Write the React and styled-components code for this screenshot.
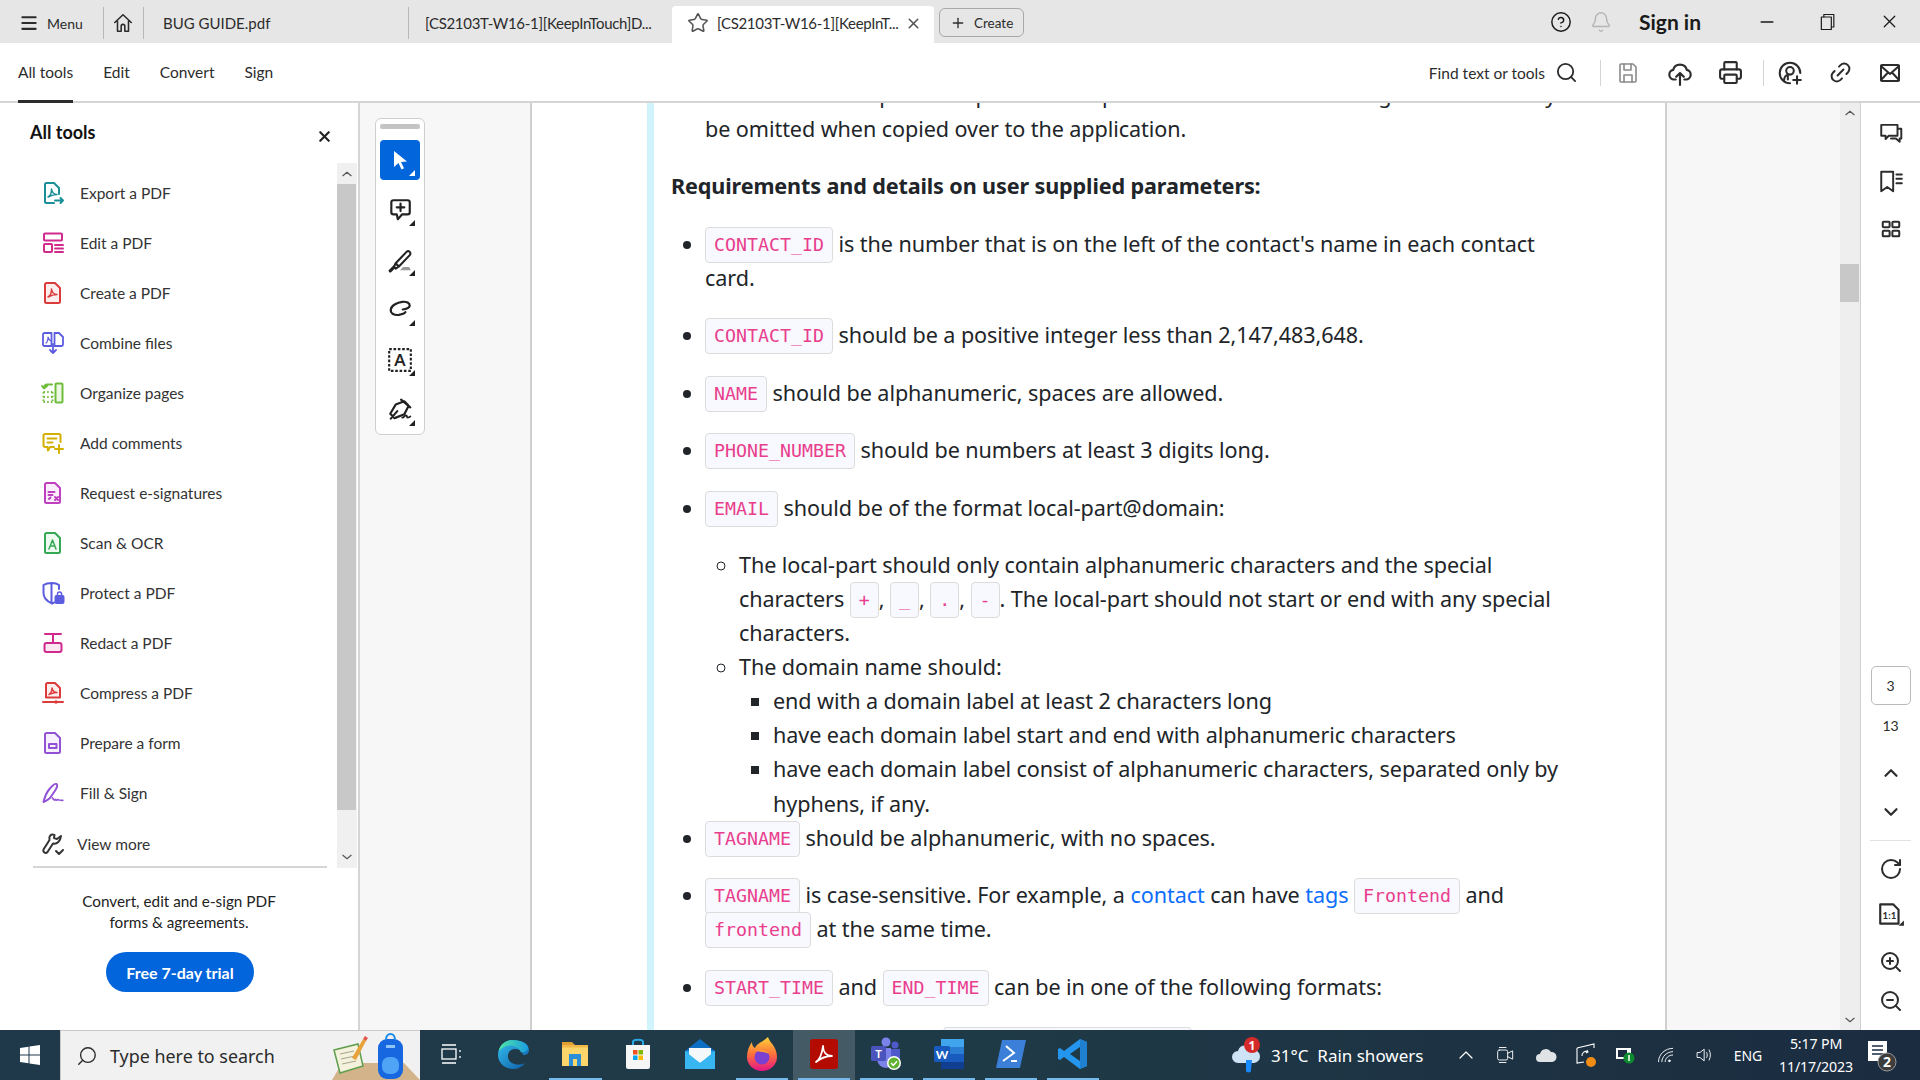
import React from 'react';
import styled, { createGlobalStyle } from 'styled-components';
import {
  Bell, ChevronDown, ChevronUp, CircleHelp, Link2, Menu, Minus, Plus, Printer, RotateCw,
  Search, Star, X, ZoomIn, ZoomOut,
} from 'lucide-react';

const Global = createGlobalStyle`
  html, body { margin: 0; padding: 0; background: #fff; }
  * { box-sizing: border-box; }
`;

const UI = `Lato, "Noto Sans", sans-serif`;
const DOC = `"Noto Sans", "Open Sans", sans-serif`;

const Root = styled.div`
  width: 1920px;
  height: 1080px;
  display: flex;
  flex-direction: column;
  overflow: hidden;
  font-family: ${UI};
  color: #2c2c2c;
`;

/* ---------- tab strip ---------- */
const TabStrip = styled.div`
  height: 43px;
  flex: none;
  display: flex;
  align-items: flex-end;
  background: #e6e6e6;
  font-size: 15px;
`;
const StripCell = styled.div`
  width: ${p => p.$w}px;
  flex: none;
  display: flex;
  align-items: center;
  padding-left: ${p => p.$pad || 0}px;
  margin-bottom: 4px;
  height: 32px;
  border-left: ${p => (p.$sep ? '1px solid #b8b8b8' : 'none')};
  white-space: nowrap;
  letter-spacing: ${p => (p.$tight ? '-0.3px' : '0')};
  gap: ${p => p.$gap || 0}px;
`;
const MenuLabel = styled.span`
  font-size: 14px;
`;
const ActiveTab = styled.div`
  width: 262px;
  height: 37px;
  flex: none;
  display: flex;
  align-items: center;
  background: #fff;
  border-radius: 4px 4px 0 0;
  padding: 0 0 3px 15px;
`;
const ActiveTitle = styled.span`
  width: 196px;
  padding-left: 8px;
  white-space: nowrap;
  font-size: 15px;
  letter-spacing: -0.3px;
`;
const CreateButton = styled.div`
  width: 85px;
  height: 29px;
  margin: 0 0 6px 5px;
  flex: none;
  display: flex;
  align-items: center;
  gap: 8px;
  padding-left: 10px;
  border: 1px solid #a8a8a8;
  border-radius: 6px;
  font-size: 13.5px;
`;
const StripRight = styled.div`
  margin-left: auto;
  height: 43px;
  display: flex;
  align-items: center;
`;
const StripSlot = styled.div`
  width: ${p => p.$w}px;
  display: flex;
  justify-content: center;
  color: ${p => p.$color || '#1a1a1a'};
`;
const SignIn = styled.div`
  width: 115px;
  padding-left: 18px;
  font-size: 21px;
  font-weight: 700;
  color: #1a1a1a;
`;

/* ---------- tool bar ---------- */
const ToolBar = styled.div`
  height: 60px;
  flex: none;
  display: flex;
  align-items: stretch;
  padding: 0 4px 0 18px;
  border-bottom: 2px solid #d5d5d5;
`;
const NavItem = styled.div`
  display: flex;
  align-items: center;
  margin-right: 30px;
  font-size: 15.5px;
  height: 60px;
  padding-top: 1px;
  border-bottom: 3px solid ${p => (p.$active ? '#2c2c2c' : 'transparent')};
`;
const BarRight = styled.div`
  margin-left: auto;
  display: flex;
  align-items: center;
  padding-top: 1px;
`;
const FindLabel = styled.span`
  font-size: 15.5px;
  margin-right: 10px;
`;
const BarSep = styled.div`
  width: 1px;
  height: 26px;
  background: #d5d5d5;
`;
const BarIcon = styled.div`
  width: ${p => p.$w || 50}px;
  display: flex;
  justify-content: center;
  color: ${p => p.$color || '#2c2c2c'};
`;

/* ---------- main ---------- */
const Main = styled.div`
  flex: 1;
  display: flex;
  min-height: 0;
`;

const ToolsPanel = styled.aside`
  width: 360px;
  flex: none;
  border-right: 2px solid #d5d5d5;
  display: flex;
  flex-direction: column;
`;
const PanelHead = styled.div`
  height: 60px;
  flex: none;
  display: flex;
  justify-content: space-between;
  padding: 18px 25px 0 30px;
  font-size: 18px;
  font-weight: 700;
  color: #111;
`;
const PanelClose = styled.div`
  padding-top: 6px;
  color: #222;
`;
const PanelBody = styled.div`
  display: flex;
  height: 705px;
  flex: none;
`;
const ToolList = styled.div`
  width: 294px;
  margin-left: 33px;
  border-bottom: 2px solid #d5d5d5;
`;
const ToolRow = styled.div`
  height: 50px;
  display: flex;
  align-items: center;
  font-size: 15.5px;
  color: #333;
  gap: 15px;
  padding-left: 8px;
`;
const MoreRow = styled(ToolRow)`
  gap: 12px;
  height: 52px;
`;
const FirstGap = styled.div`
  height: 5px;
`;
const PanelScroll = styled.div`
  width: 20px;
  margin-left: 10px;
  display: flex;
  flex-direction: column;
  background: #f0f0f0;
  color: #555;
`;
const ScrollCap = styled.div`
  height: ${p => p.$h}px;
  flex: none;
  display: flex;
  align-items: ${p => p.$align || 'center'};
  justify-content: center;
  padding-bottom: ${p => p.$bottom || 0}px;
`;
const ScrollThumb = styled.div`
  flex: 1;
  background: #c8c8c8;
  margin-right: 1px;
`;
const Promo = styled.div`
  text-align: center;
  font-size: 15.3px;
  line-height: 21px;
  color: #222;
  padding-top: 23px;
`;
const TrialButton = styled.div`
  width: 148px;
  height: 40px;
  margin: 19px 0 0 106px;
  border-radius: 20px;
  background: #0265dc;
  color: #fff;
  font-weight: 700;
  font-size: 16px;
  display: flex;
  align-items: center;
  justify-content: center;
`;

const ViewerGutter = styled.div`
  width: 172px;
  flex: none;
  background: #f7f7f7;
  border-right: 2px solid #cfcfcf;
  padding: 15px 0 0 15px;
`;
const QuickRail = styled.div`
  width: 50px;
  height: 317px;
  border: 1px solid #cfcfcf;
  border-radius: 6px;
  background: #fff;
  padding: 5px 4px 0 4px;
  display: flex;
  flex-direction: column;
  align-items: center;
  gap: 10px;
`;
const Grabber = styled.div`
  width: 40px;
  height: 5px;
  border-radius: 2px;
  background: #c4c4c4;
  margin-bottom: 1px;
`;
const RailButton = styled.div`
  width: 40px;
  height: 40px;
  flex: none;
  position: relative;
  display: flex;
  align-items: center;
  justify-content: center;
  border-radius: 4px;
  background: ${p => (p.$on ? '#0265dc' : 'transparent')};
  color: ${p => (p.$on ? '#fff' : '#222')};
  &::after {
    content: '';
    position: absolute;
    right: 5px;
    bottom: 4px;
    border-style: solid;
    border-width: 0 0 6px 6px;
    border-color: transparent transparent ${p => (p.$on ? '#fff' : '#222')} transparent;
  }
`;

/* ---------- document ---------- */
const DocPage = styled.main`
  width: 1133px;
  flex: none;
  overflow: hidden;
  background: #fff;
`;
const Callout = styled.div`
  margin: -25px 0 0 115px;
  border-left: 7px solid #cff4fc;
  padding-left: 17px;
  height: 1100px;
  font-family: ${DOC};
  font-size: 21.6px;
  line-height: 34.1px;
  letter-spacing: -0.08px;
  color: #212529;
  white-space: nowrap;
`;
const DocList = styled.ul`
  margin: 0;
  padding-left: 34px;
`;
const Para = styled.p`
  margin: 0 0 ${p => (p.$tight ? 0 : 23.3)}px;
`;
const Heading = styled(Para)`
  font-weight: 700;
  letter-spacing: -0.13px;
`;
const Code = styled.code`
  display: inline-block;
  height: 36px;
  line-height: 33px;
  padding: 0 8px;
  vertical-align: top;
  margin: 0 0 -2px;
  letter-spacing: 0;
  font-family: "DejaVu Sans Mono", "Liberation Mono", monospace;
  font-size: 18.27px;
  color: #e83e8c;
  background: #f8f8ff;
  border: 1px solid #dcdcdc;
  border-radius: 4px;
`;
const DocLink = styled.a`
  color: #0d6efd;
`;
const FormatRow = styled.p`
  margin: 0;
  padding-left: 238px;
`;

const PageGutter = styled.div`
  flex: 1;
  background: #f7f7f7;
  border-left: 2px solid #cfcfcf;
`;
const DocScroll = styled.div`
  width: 20px;
  flex: none;
  display: flex;
  flex-direction: column;
  background: #eeeeee;
  color: #555;
`;
const DocThumb = styled.div`
  height: 38px;
  flex: none;
  margin: 141px 1px 0 0;
  background: #c8c8c8;
`;
const RightRail = styled.div`
  width: 60px;
  flex: none;
  border-left: 1px solid #cfcfcf;
  display: flex;
  flex-direction: column;
  align-items: center;
  color: #2c2c2c;
  padding-top: 6px;
`;
const RailIcon = styled.div`
  height: ${p => p.$h || 48}px;
  flex: none;
  display: flex;
  align-items: center;
  justify-content: center;
`;
const Spacer = styled.div`
  flex: 1;
`;
const PageBox = styled.div`
  width: 40px;
  height: 39px;
  flex: none;
  border: 1px solid #bbb;
  border-radius: 5px;
  display: flex;
  align-items: center;
  justify-content: center;
  font-size: 14px;
`;
const PageTotal = styled.div`
  height: 40px;
  margin-bottom: 8px;
  flex: none;
  display: flex;
  align-items: center;
  font-size: 14px;
`;
const RailRule = styled.div`
  width: 41px;
  height: 1px;
  flex: none;
  margin: 8px 0 4px;
  background: #e2e2e2;
`;

/* ---------- taskbar ---------- */
const Taskbar = styled.footer`
  height: 50px;
  flex: none;
  display: flex;
  align-items: stretch;
  background: linear-gradient(90deg, #20394a 0%, #1f3a47 50%, #1b2c40 100%);
  color: #fff;
  font-family: ${DOC};
`;
const StartCell = styled.div`
  width: 60px;
  flex: none;
  display: flex;
  align-items: center;
  justify-content: center;
`;
const SearchBox = styled.div`
  width: 360px;
  flex: none;
  display: flex;
  align-items: center;
  background: #f1f1f1;
  border: 1px solid #c9c9c9;
  border-width: 1px 0 0 1px;
  color: #2b2b2b;
  font-size: 17.9px;
  padding-left: 15px;
  gap: 12px;
`;
const SearchArt = styled.div`
  margin-left: auto;
  height: 49px;
`;
const AppSlot = styled.div`
  width: 62.2px;
  flex: none;
  display: flex;
  flex-direction: column;
  background: ${p => (p.$active ? 'rgba(255,255,255,0.17)' : 'transparent')};
`;
const AppIcon = styled.div`
  flex: 1;
  display: flex;
  align-items: center;
  justify-content: center;
`;
const AppMark = styled.div`
  height: 2px;
  margin: 0 5px;
  background: ${p => (p.$on ? '#76b9ed' : 'transparent')};
`;
const Weather = styled.div`
  width: 215px;
  margin-left: auto;
  flex: none;
  display: flex;
  align-items: center;
  gap: 10px;
  font-size: 17px;
  white-space: pre;
`;
const TraySlot = styled.div`
  width: ${p => p.$w || 40}px;
  flex: none;
  display: flex;
  align-items: center;
  justify-content: center;
  font-size: 14px;
`;
const Clock = styled(TraySlot)`
  flex-direction: column;
  line-height: 23px;
  font-size: 14.2px;
  letter-spacing: -0.15px;
`;
const TrayEnd = styled.div`
  width: 16px;
  flex: none;
`;

/* ---------- drawings ---------- */
const Svg = ({ size = 24, w, h, vb = '0 0 24 24', color = 'currentColor', sw = 1.8, children }) => (
  <svg width={w || size} height={h || size} viewBox={vb} fill="none" stroke={color} strokeWidth={sw} strokeLinecap="round" strokeLinejoin="round">
    {children}
  </svg>
);
const Squiggle = ({ c, d = 'M7 16c2-1 3.5-4.5 3.5-8 .5 3 2.500 5.500 5.500 5.500-3 0-6 1-9 2.500z' }) => (
  <path d={d} stroke={c} strokeWidth="1.500" />
);
const DocShape = ({ c, fill = 'none' }) => (
  <path d="M4 3.500C4 2.700 4.700 2 5.500 2H14l5 5v13.500c0 .8-.7 1.500-1.500 1.500h-12C4.700 22 4 21.300 4 20.500z" stroke={c} fill={fill} strokeWidth="2" />
);

const tools = [
  ['Export a PDF', <Svg><path d="M18 13V7l-5-5H5.500C4.700 2 4 2.700 4 3.500v17c0 .8.700 1.500 1.500 1.500H13" stroke="#1a8f97" strokeWidth="2" /><Squiggle c="#1a8f97" /><path d="M14 19.500h8M19.500 17l2.500 2.500-2.500 2.500" stroke="#1a8f97" strokeWidth="2" /></Svg>],
  ['Edit a PDF', <Svg sw={2} color="#d02a8d"><rect x="3" y="2.500" width="18" height="7" rx="1" /><rect x="3" y="13" width="8" height="8" rx="1" /><path d="M14 14h8M14 17.500h8M14 21h8" /></Svg>],
  ['Create a PDF', <Svg><DocShape c="#dc3b3b" fill="#fdeeee" /><Squiggle c="#dc3b3b" /></Svg>],
  ['Combine files', <Svg sw={1.800} color="#5c5ce0"><path d="M10.500 15H3.500C2.700 15 2 14.300 2 13.500v-10C2 2.700 2.700 2 3.500 2h7zM13.500 15h7c.8 0 1.500-.7 1.500-1.500V6l-4-4h-4.500z" /><path d="M12 13v9M9 19l3 3 3-3" /><path d="M5 12c1.500-1 2-3 2-6 .5 2 1 3 3 4" strokeWidth="1.200" /></Svg>],
  ['Organize pages', <Svg sw={2} color="#6fbd3a"><rect x="14.500" y="2.500" width="7" height="19" rx="1" fill="#eef8e6" /><path d="M11 3.500H6.500C4 3.500 3 5 3 7M1 5l2 2.500L6 5" /><path d="M2.500 11h9M2.500 16h9M2.500 21h9M2.500 11v10M11.500 11v10" strokeDasharray="1.500 2.200" strokeLinecap="butt" /></Svg>],
  ['Add comments', <Svg sw={2} color="#d3b000"><path d="M13 16H9l-2 3.500L6.500 16H4c-.8 0-1.500-.7-1.500-1.500v-10C2.500 3.700 3.200 3 4 3h14c.8 0 1.500.7 1.500 1.500V11" /><path d="M6.500 7.500h9M6.500 11.500h5M18 14v8M14 18h8" /></Svg>],
  ['Request e-signatures', <Svg><DocShape c="#bf3fbf" fill="#fbeefb" /><path d="M7.500 11h6M7.500 14h4M8 18l1.500-1.500M14 16l3 3M17 16l-3 3" stroke="#bf3fbf" strokeWidth="2" /></Svg>],
  ['Scan & OCR', <Svg><DocShape c="#35a853" fill="#effaf1" /><path d="M8 18l3.500-9 3.500 9M9.200 15h4.600" stroke="#35a853" strokeWidth="1.500" /></Svg>],
  ['Protect a PDF', <Svg sw={2} color="#5c5ce0"><path d="M11 2C7 2 4 3 2.500 4v8c0 5 4 8.500 8.500 10.500 1 0 1.500-.5 2-1M11 2c2.500 0 5 .5 7 2v4M10.500 2.500v19" /><rect x="14.500" y="15" width="8" height="7" rx="1" fill="#5c5ce0" /><path d="M16.500 15v-2a2 2 0 0 1 4 0v2" strokeWidth="1.500" /></Svg>],
  ['Redact a PDF', <Svg sw={2} color="#d02a8d"><path d="M4 3h16M12 3v9" /><rect x="3.500" y="12" width="17" height="9" rx="2" fill="#fbe8f3" /></Svg>],
  ['Compress a PDF', <Svg><path d="M5 16.500V3.500C5 2.700 5.700 2 6.500 2H14l5 5v9.500z" stroke="#dc3b3b" fill="#fdeeee" strokeWidth="2" /><Squiggle c="#dc3b3b" d="M8 13.500c1.500-1 3-3 3-6.500.5 2.500 2 4.500 5 4.500-3 0-5 1-8 2z" /><path d="M2 21h20" stroke="#dc3b3b" strokeWidth="2" /><circle cx="15" cy="21" r="1.800" fill="#dc3b3b" stroke="none" /></Svg>],
  ['Prepare a form', <Svg><DocShape c="#9152d6" fill="#f7f0fd" /><rect x="8" y="13" width="7.500" height="4" stroke="#9152d6" strokeWidth="2" /></Svg>],
  ['Fill & Sign', <Svg sw={2} color="#9152d6"><path d="M2.500 21c1-4 2.500-9 6-13 3-3.500 6-5.500 7-5 1.500 1 .5 4-2 7.500L9 17c-2 1.500-4.500 3.500-6.500 4z" /><path d="M11.500 17c1 1.500 2 2.500 3 1.500 .8 1 1.500.8 2.300 0 .8.8 2 .8 5 .8" strokeWidth="1.700" /></Svg>],
];

const HomeIcon = () => <Svg size={22} sw={1.700}><path d="M3 11.500 12 3l9 8.500M6 9.500V21h4v-5.500a2 2 0 0 1 4 0V21h4V9.500" /></Svg>;
const SaveIcon = () => <Svg size={24} sw={1.600}><path d="M5 3h12l3 3v14a1 1 0 0 1-1 1H5a1 1 0 0 1-1-1V4a1 1 0 0 1 1-1z" /><path d="M8 3v6h7V3M8 21v-7h8v7" /></Svg>;
const UploadIcon = () => <Svg size={26} sw={2}><path d="M8 18H6.500a4.500 4.500 0 0 1-.8-8.900 6.500 6.500 0 0 1 12.600 0 4.500 4.500 0 0 1-.8 8.900H16" /><path d="M12 23V12M8.500 15.500 12 12l3.500 3.500" /></Svg>;
const ShareIcon = () => <Svg size={26} sw={1.900}><path d="M12 21.500a9.500 9.500 0 1 1 9.500-9.500" /><circle cx="12" cy="10" r="3.500" /><path d="M6.500 19c0-3 2-5 3.500-5.500v4.500M18.500 15v7M15 18.500h7" /></Svg>;
const MailIcon = () => <Svg size={24} sw={2}><rect x="3" y="4" width="18" height="16" rx="1" /><path d="M3 5l9 8 9-8M3 19l7-7.500M21 19l-7-7.500" /></Svg>;
const RestoreIcon = () => <Svg size={20} sw={1.400}><rect x="4" y="6" width="12" height="15" /><path d="M7 6V3h12v15h-3" /></Svg>;
const CommentPlus = () => <Svg size={26} sw={2}><path d="M6 3h13a2 2 0 0 1 2 2v9a2 2 0 0 1-2 2h-5l-4 4.500-1-4.500H6a2 2 0 0 1-2-2V5a2 2 0 0 1 2-2zM12.500 6v7M9 9.500h7" /></Svg>;
const MarkerIcon = () => <Svg size={26} sw={1.900}><path d="M8 15 18 4.500a2 2 0 0 1 3 3L11 18zM8 15l-1.500 3 1.500 2 3-2" /><path d="M3 22l3-3" strokeWidth="3" /><path d="M12 21.500h10l-1.500-3H15z" fill="#999" stroke="none" /></Svg>;
const LassoIcon = () => <Svg size={26} sw={2}><path d="M21 8c0-2.500-3-4-7-3.500S4 7.500 3.500 11.500 7 17 11 16.500c3-.5 5-1 6-2.500M21 8c-.5 2-3 3-6.500 3.500" /></Svg>;
const PenIcon = () => <Svg size={26} sw={2}><path d="M16 4 20 8l-4 8-9 3.500L3 15.500 8 7zM13 2.500 21.500 9.500M3.500 20l6-7" /><path d="M14 19c2 0 2-2 3.500-2s.5 2 1.500 2 1.500-.5 2.500-1" strokeWidth="1.700" /></Svg>;
const TextBoxIcon = () => (
  <svg width="26" height="26" viewBox="0 0 24 24">
    <rect x="2" y="2" width="20" height="20" fill="none" stroke="#222" strokeWidth="2" strokeDasharray="2.400 1.600" />
    <text x="12" y="17.500" textAnchor="middle" fontSize="15" fontWeight="700" fontFamily="Lato" fill="#222">A</text>
  </svg>
);
const Caret = () => <Svg size={14} sw={2} vb="0 0 24 24"><path d="M5 15l7-6 7 6" /></Svg>;
const CaretDown = () => <Svg size={14} sw={2}><path d="M5 9l7 6 7-6" /></Svg>;
const Wrench = () => <Svg size={24} sw={2}><path d="M20 4l-4 3-3-1 .5-3C10 1.500 7.500 4 8.500 8L2.500 17.500c-.5 1 0 2.500 1 3 1 .7 2.300.3 3-.5L12 11.500c4 1 7.500-2.500 8-7.500z" /><path d="M15 19l3 3 4-4" /></Svg>;

const Bubbles = () => <Svg size={26} sw={1.800}><path d="M3 4.500h15v10H10l-3 3v-3H3zM18 8h3.500v9H20v3l-3.500-3H12" /></Svg>;
const Bookmarks = () => <Svg size={26} sw={1.800}><path d="M3 3.500h11v18l-5.500-4-5.500 4zM17 6h5M17 10h5M17 14h5" /></Svg>;
const Grid = () => <Svg size={22} sw={2.200}><rect x="3" y="4" width="7.500" height="6" rx="1" /><rect x="13.500" y="4" width="7.500" height="6" rx="1" /><rect x="3" y="14" width="7.500" height="6" rx="1" /><rect x="13.500" y="14" width="7.500" height="6" rx="1" /></Svg>;
const ActualSize = () => (
  <svg width="28" height="26" viewBox="0 0 26 24" fill="none" stroke="#2c2c2c" strokeWidth="2">
    <path d="M3 3h12l5 5v13H3z" strokeLinejoin="round" />
    <text x="11.500" y="17" textAnchor="middle" fontSize="9" fontWeight="700" fontFamily="Lato" fill="#2c2c2c" stroke="none">1:1</text>
    <path d="M25 18v5h-5z" fill="#2c2c2c" stroke="none" />
  </svg>
);

const WinLogo = () => (
  <svg width="20" height="20" viewBox="0 0 20 20" fill="#fff">
    <path d="M0 3 8.500 1.700V9.500H0zM9.500 1.500 20 0V9.500H9.500zM0 10.500H8.500V18.300L0 17zM9.500 10.500H20V20L9.500 18.500z" />
  </svg>
);
const BookArt = () => (
  <svg width="102" height="49" viewBox="0 0 102 49">
    <path d="M14 49 24 32H86L102 49z" fill="#d3b48a" />
    <path d="M16 19 40 13 45 35 22 42z" fill="#f4f1dc" stroke="#5f9e4d" strokeWidth="1.500" />
    <path d="M22 23l14-3M23 28l14-3M24 33l14-3" stroke="#a6a58a" />
    <path d="M34 27 45 8l3 2-10 19z" fill="#e9a13a" />
    <path d="M45 8l2-3 3 2-2 3z" fill="#e2574c" />
    <rect x="60" y="8" width="25" height="40" rx="9" fill="#1667e0" />
    <path d="M68 9c0-8 9-8 9 0" fill="none" stroke="#1a8be8" strokeWidth="2" />
    <rect x="64" y="26" width="17" height="17" rx="7" fill="#4fa4f5" />
    <rect x="68" y="14" width="9" height="3" fill="#8cc4f8" />
  </svg>
);

const Edge = () => (
  <svg width="32" height="32" viewBox="0 0 32 32">
    <defs>
      <linearGradient id="edgeA" x1="0" y1="0" x2="1" y2="1"><stop offset="0" stopColor="#35c1f1" /><stop offset="1" stopColor="#0c59a4" /></linearGradient>
      <linearGradient id="edgeB" x1="0" y1="0" x2="1" y2="0"><stop offset="0" stopColor="#50e6a0" /><stop offset="1" stopColor="#1b9de2" /></linearGradient>
    </defs>
    <path d="M15 2C7 2 1 9 1 17c0 8 7 14 15 14 5 0 9-2 12-6-6 3-16 2-17-6-.6-5 3-8 7-8 5 0 8 3 8 6 4 0 6-2 6-5C32 6 24 2 15 2z" fill="url(#edgeA)" />
    <path d="M15 2C8 2 2 8 2 13c3-4 8-6 12-5.500 6 .5 9 4 10 7 4-.5 7-2 7-5C31 5 23 2 15 2z" fill="url(#edgeB)" />
  </svg>
);
const Folder = () => (
  <svg width="30" height="30" viewBox="0 0 30 30">
    <path d="M2 3h10l3 3H2z" fill="#e0a030" />
    <rect x="2" y="6" width="26" height="21" fill="#fcd66a" />
    <path d="M9 27V15h12v12h-4v-7h-4v7z" fill="#2a8fd8" />
    <rect x="2" y="6" width="26" height="2.500" fill="#f2b84b" />
  </svg>
);
const Store = () => (
  <svg width="30" height="32" viewBox="0 0 30 32">
    <path d="M10 7V4c0-3 10-3 10 0v3" fill="none" stroke="#27a9e8" strokeWidth="2" />
    <path d="M3 7h24v22a2 2 0 0 1-2 2H5a2 2 0 0 1-2-2z" fill="#f6f6f6" />
    <rect x="10" y="12" width="4.500" height="4.500" fill="#f25022" />
    <rect x="15.500" y="12" width="4.500" height="4.500" fill="#7fba00" />
    <rect x="10" y="17.500" width="4.500" height="4.500" fill="#00a4ef" />
    <rect x="15.500" y="17.500" width="4.500" height="4.500" fill="#ffb900" />
  </svg>
);
const MailApp = () => (
  <svg width="32" height="30" viewBox="0 0 32 30">
    <path d="M1 12 16 0l15 12z" fill="#0d6fc4" />
    <rect x="1" y="12" width="30" height="18" fill="#2aa5e8" />
    <path d="M5 9h22v8l-11 7-11-7z" fill="#f4f8fb" />
    <path d="M1 12l15 12 15-12v18H1z" fill="#38b6f2" />
  </svg>
);
const Firefox = () => (
  <svg width="32" height="34" viewBox="0 0 32 34">
    <defs>
      <linearGradient id="fx" x1="0" y1="0" x2="0" y2="1"><stop offset="0" stopColor="#ffd43b" /><stop offset=".5" stopColor="#ff7139" /><stop offset="1" stopColor="#e31587" /></linearGradient>
    </defs>
    <path d="M22 0c1 5 9 9 9 20a15 14 0 0 1-30 0C1 14 3 9 6 5c0 3 1 5 3 6 2-5 8-6 13-11z" fill="url(#fx)" />
    <circle cx="16" cy="20" r="7.500" fill="#7b3fd1" />
    <path d="M10 14c4-3 11-2 13 3-3-2-8-2-13-3z" fill="#ff9a2e" />
  </svg>
);
const AcrobatApp = () => (
  <svg width="30" height="32" viewBox="0 0 30 32">
    <rect x="1" y="1" width="28" height="30" rx="3" fill="#b30b00" />
    <path d="M7 24c3-2 6-8 7-16 0 6 3 10 9 10-6 0-11 2-16 6z" fill="none" stroke="#fff" strokeWidth="1.800" strokeLinejoin="round" />
  </svg>
);
const Teams = () => (
  <svg width="32" height="34" viewBox="0 0 32 34">
    <circle cx="16" cy="5" r="4.500" fill="#7b83eb" />
    <circle cx="25" cy="8" r="3.500" fill="#5059c9" />
    <path d="M19 12h11v9a5 5 0 0 1-5 5h-6z" fill="#5059c9" />
    <path d="M7 11h14v15a5 5 0 0 1-5 5 9 9 0 0 1-9-9z" fill="#7b83eb" />
    <rect x="1" y="9" width="15" height="15" rx="1.500" fill="#4b53bc" />
    <text x="8.500" y="21" textAnchor="middle" fontSize="11" fontWeight="700" fontFamily="Lato" fill="#fff">T</text>
    <circle cx="24" cy="26" r="7" fill="#fff" />
    <circle cx="24" cy="26" r="5.500" fill="#5fb12f" />
    <path d="M21 26l2.300 2.300 3.700-4" fill="none" stroke="#fff" strokeWidth="1.500" />
  </svg>
);
const Word = () => (
  <svg width="32" height="32" viewBox="0 0 32 32">
    <rect x="8" y="1" width="23" height="30" rx="2" fill="#2b7cd3" />
    <rect x="8" y="1" width="23" height="8" fill="#41a5ee" />
    <rect x="8" y="16" width="23" height="8" fill="#185abd" />
    <rect x="8" y="24" width="23" height="7" fill="#103f91" />
    <rect x="1" y="8" width="16" height="16" rx="1.500" fill="#185abd" />
    <text x="9" y="20.500" textAnchor="middle" fontSize="12" fontWeight="700" fontFamily="Lato" fill="#fff">W</text>
  </svg>
);
const PowerShell = () => (
  <svg width="32" height="30" viewBox="0 0 32 30">
    <path d="M7 1h24L25 29H1z" fill="#3b7fd9" />
    <path d="M11 7l8 7-11 8M16 22h6" fill="none" stroke="#fff" strokeWidth="2" />
  </svg>
);
const VSCode = () => (
  <svg width="30" height="32" viewBox="0 0 30 32">
    <path d="M22 1 29 4v24l-7 3L6 19l-4 3-2-1v-10l2-1 4 3z" fill="#2496ed" />
    <path d="M22 9 12 16l10 7zM22 1v30l7-3V4z" fill="#1f80cf" />
    <path d="M22 9 12 16l10 7z" fill="#1f3a47" />
  </svg>
);

const WeatherIcon = () => (
  <svg width="30" height="42" viewBox="0 0 30 42">
    <path d="M7 29a6 6 0 0 1 0-12 8 8 0 0 1 15-1 6.500 6.500 0 0 1 1 13z" fill="#cfe3f7" />
    <path d="M15 26h6l-1 10a2.500 2.500 0 0 1-5 0z" fill="#1a8cff" />
    <circle cx="21" cy="11" r="8" fill="#d42a2a" />
    <text x="21" y="15.500" textAnchor="middle" fontSize="12" fontWeight="700" fontFamily="Noto Sans" fill="#fff">1</text>
  </svg>
);
const MeetIcon = () => <Svg size={20} color="#fff" sw={1.100}><rect x="2" y="6" width="12" height="12" rx="2" /><path d="M14 10l6-3v10l-6-3M4 3h8M4 21h8" /></Svg>;
const CloudIcon = () => <svg width="22" height="16" viewBox="0 0 22 16"><path d="M5 15a4 4 0 0 1 0-8 6 6 0 0 1 11-2 5 5 0 0 1 1 10z" fill="#dfe3e6" /></svg>;
const UpdateIcon = () => (
  <svg width="22" height="24" viewBox="0 0 22 24" fill="none" stroke="#fff" strokeWidth="1.100">
    <path d="M2 5 19 1v4M2 5v15l7-1" />
    <path d="M7 13a4 4 0 0 1 6-4M12 7l1 2-2 1" />
    <circle cx="16" cy="19" r="5" fill="#f28c13" stroke="none" />
  </svg>
);
const BatteryIcon = () => (
  <svg width="20" height="18" viewBox="0 0 20 18">
    <rect x="0" y="2" width="15" height="11" fill="#fff" />
    <rect x="2" y="4" width="9" height="7" fill="#1b2c40" />
    <circle cx="13" cy="12" r="5.500" fill="#0f8a2f" />
    <path d="M13 9v6" stroke="#fff" strokeWidth="1.500" />
  </svg>
);
const WifiIcon = () => <Svg size={20} color="#fff" sw={1.100}><path d="M3 20C3 11 11 4 20 4M7 20c0-6 6-12 13-12M11 20c0-4 4-8 9-8" /><circle cx="16" cy="19" r="1" fill="#fff" /></Svg>;
const VolumeIcon = () => <Svg size={20} color="#fff" sw={1.100}><path d="M3 9h3l5-4v14l-5-4H3zM14 9c1 2 1 4 0 6M17 6c2 4 2 8 0 12" /></Svg>;
const NotifyIcon = () => (
  <svg width="30" height="34" viewBox="0 0 30 34">
    <path d="M1 3h19v20H1z" fill="#fff" />
    <path d="M5 8h11M5 12h11M5 16h11" stroke="#1b2c40" strokeWidth="1.300" />
    <circle cx="20" cy="24" r="9" fill="#3d3d3d" stroke="#999" />
    <text x="20" y="29" textAnchor="middle" fontSize="14" fontWeight="700" fontFamily="Noto Sans" fill="#fff">2</text>
  </svg>
);

const apps = [
  { el: <Edge /> },
  { el: <Folder />, on: true },
  { el: <Store /> },
  { el: <MailApp /> },
  { el: <Firefox />, on: true },
  { el: <AcrobatApp />, on: true, active: true },
  { el: <Teams />, on: true },
  { el: <Word />, on: true },
  { el: <PowerShell />, on: true },
  { el: <VSCode />, on: true },
];

export default function App() {
  return (
    <Root>
      <Global />
      <TabStrip>
        <StripCell $w={103} $pad={19} $gap={8}><Menu size={20} strokeWidth={2.500} /><MenuLabel>Menu</MenuLabel></StripCell>
        <StripCell $w={40} $pad={8} $sep><HomeIcon /></StripCell>
        <StripCell $w={265} $pad={19} $sep>BUG GUIDE.pdf</StripCell>
        <StripCell $w={264} $pad={16} $sep $tight>[CS2103T-W16-1][KeepInTouch]D...</StripCell>
        <ActiveTab>
          <Star size={22} strokeWidth={1.700} color="#555" />
          <ActiveTitle>[CS2103T-W16-1][KeepInT...</ActiveTitle>
          <X size={17} strokeWidth={2.200} color="#555" />
        </ActiveTab>
        <CreateButton><Plus size={16} strokeWidth={2} />Create</CreateButton>
        <StripRight>
          <StripSlot $w={40}><CircleHelp size={22} strokeWidth={1.600} /></StripSlot>
          <StripSlot $w={40} $color="#b5b5b5"><Bell size={22} strokeWidth={1.600} /></StripSlot>
          <SignIn>Sign in</SignIn>
          <StripSlot $w={61}><Minus size={20} strokeWidth={1.800} /></StripSlot>
          <StripSlot $w={61}><RestoreIcon /></StripSlot>
          <StripSlot $w={62}><X size={21} strokeWidth={1.400} /></StripSlot>
        </StripRight>
      </TabStrip>

      <ToolBar>
        <NavItem $active>All tools</NavItem>
        <NavItem>Edit</NavItem>
        <NavItem>Convert</NavItem>
        <NavItem>Sign</NavItem>
        <BarRight>
          <FindLabel>Find text or tools</FindLabel>
          <Search size={23} strokeWidth={1.900} />
          <BarIcon $w={22} />
          <BarSep />
          <BarIcon $w={54} $color="#8a8a8a"><SaveIcon /></BarIcon>
          <BarIcon $w={50}><UploadIcon /></BarIcon>
          <BarIcon $w={50}><Printer size={25} strokeWidth={2} /></BarIcon>
          <BarIcon $w={8} />
          <BarSep />
          <BarIcon $w={52}><ShareIcon /></BarIcon>
          <BarIcon $w={48}><Link2 size={25} strokeWidth={1.900} transform="rotate(-45)" /></BarIcon>
          <BarIcon $w={52}><MailIcon /></BarIcon>
        </BarRight>
      </ToolBar>

      <Main>
        <ToolsPanel>
          <PanelHead>
            <span>All tools</span>
            <PanelClose><X size={17} strokeWidth={3} /></PanelClose>
          </PanelHead>
          <PanelBody>
            <ToolList>
              <FirstGap />
              {tools.map(([label, icon]) => (
                <ToolRow key={label}>{icon}<span>{label}</span></ToolRow>
              ))}
              <MoreRow><Wrench /><span>View more</span></MoreRow>
            </ToolList>
            <PanelScroll>
              <ScrollCap $h={21}><Caret /></ScrollCap>
              <ScrollThumb />
              <ScrollCap $h={58} $align="flex-end" $bottom={4}><CaretDown /></ScrollCap>
            </PanelScroll>
          </PanelBody>
          <Promo>
            Convert, edit and e-sign PDF<br />forms &amp; agreements.
          </Promo>
          <TrialButton>Free 7-day trial</TrialButton>
        </ToolsPanel>

        <ViewerGutter>
          <QuickRail>
            <Grabber />
            <RailButton $on><svg width="24" height="24" viewBox="0 0 24 24" fill="#fff"><path d="M6 3v16l4.500-4 3 6.500 2.500-1.200-3-6.300 6-.5z" /></svg></RailButton>
            <RailButton><CommentPlus /></RailButton>
            <RailButton><MarkerIcon /></RailButton>
            <RailButton><LassoIcon /></RailButton>
            <RailButton><TextBoxIcon /></RailButton>
            <RailButton><PenIcon /></RailButton>
          </QuickRail>
        </ViewerGutter>

        <DocPage>
          <Callout>
            <DocList>
              <li>
                <Para>commands that span multiple lines as space characters surrounding line-breaks may<br />be omitted when copied over to the application.</Para>
              </li>
            </DocList>
            <Heading>Requirements and details on user supplied parameters:</Heading>
            <DocList>
              <li><Para><Code>CONTACT_ID</Code> is the number that is on the left of the contact&apos;s name in each contact<br />card.</Para></li>
              <li><Para><Code>CONTACT_ID</Code> should be a positive integer less than 2,147,483,648.</Para></li>
              <li><Para><Code>NAME</Code> should be alphanumeric, spaces are allowed.</Para></li>
              <li><Para><Code>PHONE_NUMBER</Code> should be numbers at least 3 digits long.</Para></li>
              <li>
                <Para><Code>EMAIL</Code> should be of the format local-part@domain:</Para>
                <DocList>
                  <li><Para $tight>The local-part should only contain alphanumeric characters and the special<br />characters <Code>+</Code>, <Code>_</Code>, <Code>.</Code>, <Code>-</Code>. The local-part should not start or end with any special<br />characters.</Para></li>
                  <li>
                    <Para $tight>The domain name should:</Para>
                    <DocList>
                      <li>end with a domain label at least 2 characters long</li>
                      <li>have each domain label start and end with alphanumeric characters</li>
                      <li>have each domain label consist of alphanumeric characters, separated only by<br />hyphens, if any.</li>
                    </DocList>
                  </li>
                </DocList>
              </li>
              <li><Para><Code>TAGNAME</Code> should be alphanumeric, with no spaces.</Para></li>
              <li><Para><Code>TAGNAME</Code> is case-sensitive. For example, a <DocLink>contact</DocLink> can have <DocLink>tags</DocLink> <Code>Frontend</Code> and<br /><Code>frontend</Code> at the same time.</Para></li>
              <li>
                <Para><Code>START_TIME</Code> and <Code>END_TIME</Code> can be in one of the following formats:</Para>
                <FormatRow><Code>yyyy-MM-dd&apos;T&apos;HH:mm:ss</Code></FormatRow>
              </li>
            </DocList>
          </Callout>
        </DocPage>

        <PageGutter />
        <DocScroll>
          <ScrollCap $h={20}><Caret /></ScrollCap>
          <DocThumb />
          <Spacer />
          <ScrollCap $h={20}><CaretDown /></ScrollCap>
        </DocScroll>
        <RightRail>
          <RailIcon><Bubbles /></RailIcon>
          <RailIcon><Bookmarks /></RailIcon>
          <RailIcon><Grid /></RailIcon>
          <Spacer />
          <PageBox>3</PageBox>
          <PageTotal>13</PageTotal>
          <RailIcon $h={39}><ChevronUp size={22} strokeWidth={2.400} /></RailIcon>
          <RailIcon $h={40}><ChevronDown size={22} strokeWidth={2.400} /></RailIcon>
          <RailRule />
          <RailIcon $h={48}><RotateCw size={24} strokeWidth={2} /></RailIcon>
          <RailIcon $h={42}><ActualSize /></RailIcon>
          <RailIcon $h={54}><ZoomIn size={24} strokeWidth={2} /></RailIcon>
          <RailIcon $h={24}><ZoomOut size={24} strokeWidth={2} /></RailIcon>
          <RailIcon $h={17} />
        </RightRail>
      </Main>

      <Taskbar>
        <StartCell><WinLogo /></StartCell>
        <SearchBox>
          <Search size={22} strokeWidth={1.500} transform="scale(-1,1)" />
          Type here to search
          <SearchArt><BookArt /></SearchArt>
        </SearchBox>
        <AppSlot>
          <AppIcon>
            <svg width="24" height="24" viewBox="0 0 24 24" fill="none" stroke="#fff" strokeWidth="1.300"><rect x="3" y="7" width="14" height="10" /><path d="M3 3h14M3 21h14M21 8v2M21 14v2" /></svg>
          </AppIcon>
          <AppMark />
        </AppSlot>
        {apps.map((app, i) => (
          <AppSlot key={i} $active={app.active}>
            <AppIcon>{app.el}</AppIcon>
            <AppMark $on={app.on} />
          </AppSlot>
        ))}
        <Weather>
          <WeatherIcon />
          {'31°C  Rain showers'}
        </Weather>
        <TraySlot><ChevronUp size={24} strokeWidth={1.200} /></TraySlot>
        <TraySlot><MeetIcon /></TraySlot>
        <TraySlot><CloudIcon /></TraySlot>
        <TraySlot><UpdateIcon /></TraySlot>
        <TraySlot><BatteryIcon /></TraySlot>
        <TraySlot><WifiIcon /></TraySlot>
        <TraySlot $w={38}><VolumeIcon /></TraySlot>
        <TraySlot $w={48}>ENG</TraySlot>
        <Clock $w={88}><span>5:17 PM</span><span>11/17/2023</span></Clock>
        <TraySlot $w={44}><NotifyIcon /></TraySlot>
        <TrayEnd />
      </Taskbar>
    </Root>
  );
}
